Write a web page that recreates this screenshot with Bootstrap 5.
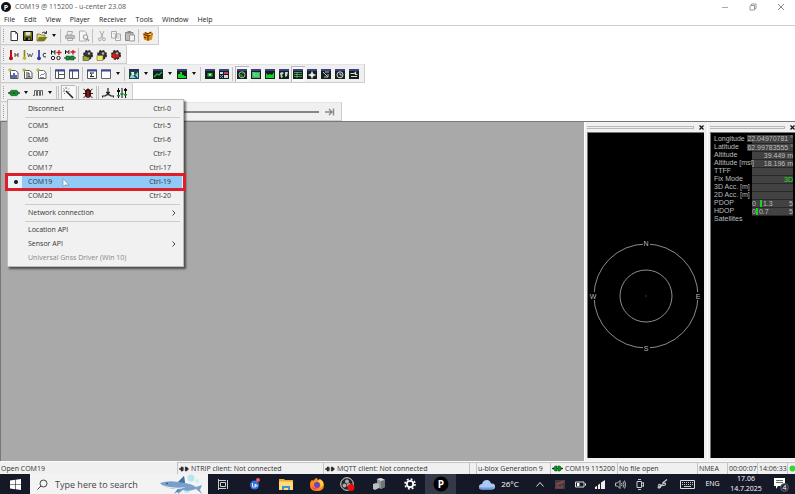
<!DOCTYPE html>
<html lang="en">
<head>
<meta charset="utf-8">
<meta name="viewport" content="width=device-width, initial-scale=1">
<title>COM19 @ 115200 - u-center 23.08</title>
<link href="https://cdn.jsdelivr.net/npm/bootstrap@5.3.0/dist/css/bootstrap.min.css" rel="stylesheet">
<style>
  body { font: 7px/10px "Open Sans", "Noto Sans", sans-serif; color: #222; background: #fff; }
  svg { display: block; flex: none; }
  button { border: 0; background: none; padding: 0; color: inherit; font: inherit; }
  .titlebar { height: 13px; color: #555; padding-left: 1px; }
  .winctl button { width: 28px; height: 13px; }
  .appmenu { height: 13px; border-bottom: 1px solid #cfcfcf; }
  .appmenu .nav-link { padding: 0 4px; margin-right: 1px; color: #222; line-height: 13px; }
  .toolstrip { background: #f0f0f0; border: 1px solid #cdcdcd; border-top-color: #e4e4e4; height: 19px; padding-right: 3px; width: fit-content; }
  .toolstrip::before { content: ""; width: 2px; height: 13px; margin: 0 2px 0 2px; border-left: 1px dotted #999; }
  .tool { width: 14px; height: 16px; display: flex; align-items: center; justify-content: center; }
  .tool svg { width: 12px; height: 12px; }
  .tool.active { background: #f8f8f8; box-shadow: inset 1px 1px #b8b8b8; }
  .drop { width: 10px; height: 16px; display: flex; align-items: center; justify-content: center; }
  .drop::after { content: ""; border: 2px solid transparent; border-top: 3px solid #111; border-bottom: 0; }
  .divide { width: 4px; height: 14px; padding-left: 1px; }
  .divide::before { content: ""; display: block; height: 14px; width: 1px; background: #c2c2c2; }
  .divide-two { width: 6px; }
  .divide-two::before { width: 3px; border: solid #c2c2c2; border-width: 0 1px; background: none; }
  .playstrip { width: 43%; padding-right: 4px; }
  .playstrip input { appearance: none; background: none; height: 12px; margin: 0 4px 0 2px; min-width: 0; }
  .playstrip input::-webkit-slider-runnable-track { height: 2px; background: #858585; }
  .playstrip input::-webkit-slider-thumb { appearance: none; width: 5px; height: 10px; margin-top: -4px; background: #888; }
  .portmenu { position: absolute; left: 7px; top: 99px; width: 177px; z-index: 5; padding: 2px 1px 1px; background: #f1f1f1; border: 1px solid #bbb; box-shadow: 2px 2px 2px rgba(0,0,0,.55); }
  .portmenu button { display: flex; justify-content: space-between; align-items: center; position: relative; width: 100%; height: 14px; padding: 0 11px 0 19px; color: #333; text-align: left; }
  .portmenu hr { margin: 1px 2px 1px 16px; border: 0; height: 1px; background: #ccc; opacity: 1; }
  .portmenu button.chosen { background: linear-gradient(90deg, #e9f3fb 13px, #91c9f7 13px); z-index: 2; }
  .portmenu .chosen::before { content: ""; position: absolute; left: 5px; top: 5px; width: 4px; height: 4px; border-radius: 2px; background: #111; }
  .portmenu .chosen::after { content: ""; position: absolute; inset: -2px -4px; border: 3px solid #dc1f2b; }
  .portmenu .pointer { position: absolute; left: 53px; top: 3px; }
  .portmenu .faded { color: #888; }
  .portmenu .submenu { padding-right: 6px; }
  .workspace { background: #a9a9a9; border: solid #777; border-width: 1px 0 0 1px; min-height: 0; }
  .dock { background: #f0f0f0; border-left: 1px solid #fff; padding: 0 3px 3px 2px; }
  .dock-sky { flex: 0 0 123px; }
  .dock-data { flex: 0 0 88px; padding-right: 0; }
  .dockhead { height: 10px; }
  .dockhead span { height: 3px; border: solid #b8b8b8; border-width: 1px 1px 1px 0; }
  .dockhead button { width: 6px; height: 10px; margin-left: 4px; display: flex; align-items: center; justify-content: center; }
  .blackpane { background: #000; border: solid #777; border-width: 1px 0 0 1px; }
  .navdata { font: 7px/8px "Liberation Sans", Arial, sans-serif; color: #bdbdbd; margin: 2px 0 0 3px; width: calc(100% - 5px); table-layout: fixed; }
  .navdata th, .navdata td { padding: 0; height: 8px; font-weight: 400; white-space: nowrap; }
  .navdata td { width: 41px; background: #424242; border-bottom: 1px solid #282828; line-height: 7px; }
  .navdata tr:last-child td { background: none; border: 0; }
  .val { display: flex; justify-content: flex-end; }
  .val span { background: #424242; }
  .val.fix { color: #19e322; }
  .gauge { display: flex; justify-content: space-between; }
  .gauge i { display: inline-block; width: 2px; height: 7px; background: #14d51c; vertical-align: top; margin-right: 1px; }
  .statusline { height: 13px; background: #f0f0f0; border-top: 1px solid #fafafa; white-space: nowrap; line-height: 12px; color: #333; }
  .statusline > div { border: solid #c4c4c4; border-width: 1px 0 0 1px; height: 12px; padding-left: 1px; overflow: hidden; display: flex; align-items: center; gap: 2px; }
  .statusline > .msg { border-width: 1px 0 0 0; border-color: #f0f0f0; }
  .w-client { width: 146px; } .w-gap { width: 7px; } .w-gen { width: 74px; } .w-port { width: 67px; } .w-file { width: 80px; } .w-clock { width: 30px; } .w-dot { width: 8px; }
  .taskbar { height: 20px; background: #151827; color: #fff; }
  .taskbar button { height: 20px; display: flex; align-items: center; justify-content: center; flex: none; }
  .taskbar .start { width: 30px; }
  .app { width: 31px; } .app.active { background: #353846; }
  .find { width: 179px; background: #f3f3f3; height: 20px; padding-left: 7px; }
  .find input { border: 0; background: none; font-size: 9px; line-height: 14px; height: 16px; min-width: 0; width: 100px; padding: 0 0 0 7px; color: #444; outline: 0; }
  .find input::placeholder { color: #444; opacity: 1; }
  .tray button { width: 20px; } .tray .wide { width: 25px; }
  .taskbar .stamp { width: 42px; display: block; line-height: 10px; overflow: hidden; }
  .taskbar .note { width: 28px; }
  .taskbar .weather { width: 62px; font-size: 8px; gap: 5px; margin-left: 12px; }
</style>
<script src="https://cdn.jsdelivr.net/npm/bootstrap@5.3.0/dist/js/bootstrap.bundle.min.js"></script>
</head>
<body class="vh-100 d-flex flex-column overflow-hidden position-relative">
<svg width="0" height="0" class="position-absolute" aria-hidden="true">
  <symbol id="i-new" viewBox="0 0 12 12"><path d="M3 1.500h4.500l2 2v7h-6.500z" fill="#fff" stroke="#333"/><path d="M7.500 1.500v2h2" fill="none" stroke="#333" stroke-width=".7"/></symbol>
  <symbol id="i-save" viewBox="0 0 12 12"><path d="M1.500 1.500h9v9h-9z" fill="#686d0b" stroke="#111"/><path d="M3.500 2h5v3.500h-5z" fill="#ddd"/><path d="M3.500 7.500h5v3h-5z" fill="#111"/><path d="M6.500 8h1v2h-1z" fill="#eee"/></symbol>
  <symbol id="i-open" viewBox="0 0 12 12"><path d="M1 4h3l1 1h4v2l-1.500 4h-6.500z" fill="#e4da62" stroke="#444" stroke-width=".6"/><path d="M3 7h8.500l-3 4h-7.500z" fill="#777b18"/><path d="M6 3q2-2 4 0M10.500 1v2.500h-2" fill="none" stroke="#222" stroke-width=".9"/></symbol>
  <symbol id="i-print" viewBox="0 0 12 12"><path d="M3.500 1.500h5l-1 3.500h-4.500zM1.500 5.500h9v3h-9zM3.500 8h5v2.500h-5z" fill="#eee" stroke="#aaa"/><path d="M2 7h8" stroke="#999"/></symbol>
  <symbol id="i-preview" viewBox="0 0 12 12"><path d="M1.500 1h5l2 2v8h-7z" fill="#f7f7f7" stroke="#b0b0b0"/><circle cx="7.500" cy="7" r="2.300" fill="#eee" stroke="#999"/><path d="M9 8.500l2 2.500" stroke="#999" stroke-width="1.300"/></symbol>
  <symbol id="i-cut" viewBox="0 0 12 12"><path d="M4 1l3 7M8 1l-3 7" stroke="#aaa"/><circle cx="3.800" cy="9.300" r="1.400" fill="none" stroke="#aaa"/><circle cx="8" cy="9.300" r="1.400" fill="none" stroke="#aaa"/></symbol>
  <symbol id="i-copy" viewBox="0 0 12 12"><path d="M1.500 1.500h5v6.500h-5zM5.500 4h5v6.500h-5z" fill="#f4f4f4" stroke="#aaa"/><path d="M7 6h2.500M7 8h2.500M3 3.500h2" stroke="#b5b5b5" stroke-width=".7"/></symbol>
  <symbol id="i-paste" viewBox="0 0 12 12"><path d="M1.500 2.500h7.500v8h-7.500z" fill="#bbb" stroke="#888"/><path d="M3.500 1h3.500v2.500h-3.500z" fill="#888"/><path d="M5.500 5h5v6h-5z" fill="#f3f3f3" stroke="#999"/></symbol>
  <symbol id="i-pack" viewBox="0 0 12 12"><path d="M1 4l2-2 3 1 3-1.500 2 2-1 6-4 1.500-4-1.500z" fill="#e08616"/><path d="M1.500 4l4.500 2 4.500-2M6 6v4.500M3 2.500l3 1.500 3-2M2 7l2 1" stroke="#4b2200" fill="none"/><path d="M6.500 4.500h3" stroke="#ffdc3c"/></symbol>
  <symbol id="i-hot" viewBox="0 0 12 12"><path d="M3 1v7.500" stroke="#b51313" stroke-width="2"/><circle cx="3" cy="9.300" r="2" fill="#b51313"/><path d="M7 4v4M10 4v4M7 6h3" stroke="#533"/></symbol>
  <symbol id="i-warm" viewBox="0 0 12 12"><path d="M2.500 1v7.500" stroke="#8b8716" stroke-width="1.600"/><circle cx="2.500" cy="9.300" r="1.700" fill="#c1b91d"/><path d="M5.500 4l1.200 4 1.300-3 1.300 3 1.500-4" fill="none" stroke="#4f5b58" stroke-width=".9"/></symbol>
  <symbol id="i-cold" viewBox="0 0 12 12"><path d="M3 1v7.500" stroke="#3645b8" stroke-width="1.800"/><circle cx="3" cy="9.300" r="1.900" fill="#2735a8"/><path d="M10 4.500q-3-1-3 1.500t3 2" fill="none" stroke="#333"/></symbol>
  <symbol id="i-mlink" viewBox="0 0 12 12"><path d="M1.500 5.500v-4l1.700 2 1.700-2v4" fill="none" stroke="#111"/><path d="M9 1v5M6.500 3.500h5" stroke="#d31818" stroke-width="1.400"/><circle cx="3" cy="9" r="1.700" fill="none" stroke="#222"/><circle cx="8.500" cy="9" r="1.700" fill="none" stroke="#222"/></symbol>
  <symbol id="i-mplug" viewBox="0 0 12 12"><path d="M1.500 5v-3.500l1.700 2 1.700-2v3.500" fill="none" stroke="#111"/><path d="M9 1v4.500M6.500 3h5" stroke="#d31818" stroke-width="1.400"/><path d="M0 9h12" stroke="#111"/><path d="M2 7h3.500v4h-3.500zM6.500 7h3.500v4h-3.500z" fill="#0a9a23" stroke="#033" stroke-width=".5"/></symbol>
  <symbol id="i-gear" viewBox="0 0 12 12"><circle cx="6" cy="6" r="4" fill="#444" stroke="#222" stroke-width="2" stroke-dasharray="2 1.140"/><circle cx="6" cy="6" r="3.500" fill="#333"/><circle cx="7" cy="4.500" r="1.200" fill="#bbb"/></symbol>
  <symbol id="i-gearopen" viewBox="0 0 12 12"><use href="#i-gear"/><path d="M1 7h3l1 1h3l-1.500 3.500h-5.500z" fill="#a8a52b" stroke="#222" stroke-width=".5"/></symbol>
  <symbol id="i-gearcard" viewBox="0 0 12 12"><use href="#i-gear"/><path d="M1 6.500h6v5h-6z" fill="#f4e75a" stroke="#665" stroke-width=".6"/></symbol>
  <symbol id="i-gearred" viewBox="0 0 12 12"><use href="#i-gear"/><path d="M1 6.500l4-3v2h4v3h-4v2z" fill="#dc1717"/></symbol>
  <symbol id="i-page1" viewBox="0 0 12 12"><path d="M2.500 2.500h5l2.500 2v6h-7.500z" fill="#fff" stroke="#555"/><path d="M0 2h4M2 0v4" stroke="#b3ae28"/><path d="M4 10v-3M6 10v-5M8 10v-3" stroke="#213a90" stroke-width="1.500"/></symbol>
  <symbol id="i-page2" viewBox="0 0 12 12"><path d="M2.500 2.500h5l2.500 2v6h-7.500z" fill="#fff" stroke="#555"/><path d="M0 2h4M2 0v4" stroke="#b3ae28"/><path d="M4 5h3v4M4 9h5M4 7h2" fill="none" stroke="#333"/></symbol>
  <symbol id="i-page3" viewBox="0 0 12 12"><path d="M2.500 2.500h5l2.500 2v6h-7.500z" fill="#fff" stroke="#666"/><path d="M0 2h4M2 0v4" stroke="#b3ae28"/><path d="M4 8l2-2 1 1 2-2M4 9.500h4" fill="none" stroke="#888"/></symbol>
  <symbol id="i-winA" viewBox="0 0 12 12"><path d="M1.500 2h9v8.500h-9z" fill="#fff" stroke="#555"/><path d="M1 2.500h10" stroke="#3c479c" stroke-width="2"/><path d="M4.500 3v7M5 6.500h5" stroke="#555"/></symbol>
  <symbol id="i-winB" viewBox="0 0 12 12"><path d="M1.500 2h9v8.500h-9z" fill="#fff" stroke="#555"/><path d="M1 2.500h10" stroke="#3c479c" stroke-width="2"/><path d="M4.500 3v7" stroke="#555"/></symbol>
  <symbol id="i-winS" viewBox="0 0 12 12"><path d="M1.500 2h9v8.500h-9z" fill="#fff" stroke="#555"/><path d="M1 2.500h10" stroke="#3c479c" stroke-width="2"/><path d="M8 5h-4l2 1.800-2 1.800h4" fill="none" stroke="#222"/></symbol>
  <symbol id="i-winE" viewBox="0 0 12 12"><path d="M1.500 2h9v8.500h-9z" fill="#fff" stroke="#666"/><path d="M1 2.500h10" stroke="#3c479c" stroke-width="2"/></symbol>
  <symbol id="i-map" viewBox="0 0 12 12"><path d="M1 1.500h10v9.500h-10z" fill="#1b4a35"/><path d="M1 1h10v2h-10z" fill="#252d76"/><path d="M2 9l3-5 2 3 3-3v6h-8z" fill="#8bd0e0"/><path d="M3 4h3v3h-2z" fill="#e8f3d0"/><path d="M6 7l3 3" stroke="#142f7d" stroke-width="1.500"/></symbol>
  <symbol id="i-dark" viewBox="0 0 12 12"><path d="M1 1h10v10h-10z" fill="#14201c"/><path d="M1 1h10v2h-10z" fill="#3a4287"/></symbol>
  <symbol id="i-chart" viewBox="0 0 12 12"><use href="#i-dark"/><path d="M2 9l3-3 2 1 3-3" fill="none" stroke="#1bbf39" stroke-width="1.200"/></symbol>
  <symbol id="i-hist" viewBox="0 0 12 12"><use href="#i-dark"/><path d="M2 10v-4h2v-2h2v3h2v1h2v2z" fill="#16d327"/></symbol>
  <symbol id="i-camera" viewBox="0 0 12 12"><use href="#i-dark"/><path d="M3.500 5h5v3.500h-5z" fill="#16b93a"/><circle cx="6" cy="6.700" r="1" fill="#dfd"/></symbol>
  <symbol id="i-deck" viewBox="0 0 12 12"><use href="#i-dark"/><path d="M2 4h3v2h-3zM6 7h4v3h-4z" fill="#d6d4e9"/><path d="M6 4h4v2h-4z" fill="#c84545"/><path d="M2 7l3 3M5 7l-3 3" stroke="#68a4e9"/></symbol>
  <symbol id="i-sky" viewBox="0 0 12 12"><use href="#i-dark"/><circle cx="6" cy="6.800" r="3" fill="none" stroke="#a9bfa9"/><path d="M4 7h2v2M6 5h2" stroke="#25bd34" fill="none"/></symbol>
  <symbol id="i-area" viewBox="0 0 12 12"><use href="#i-dark"/><path d="M2 4h8v6h-8z" fill="#35b65b"/><path d="M4 4v4h5M4 6h5" stroke="#b4e4bb" fill="none" stroke-width=".7"/></symbol>
  <symbol id="i-level" viewBox="0 0 12 12"><use href="#i-dark"/><path d="M2 5l2 2 2-1 2 1 2-3v6h-8z" fill="#18cf2b"/></symbol>
  <symbol id="i-world" viewBox="0 0 12 12"><use href="#i-dark"/><path d="M2 5l2-1 2 1-2 2 1 2-2 1zM7 4h3l-1 4-2 1z" fill="#c8d5c8"/></symbol>
  <symbol id="i-list" viewBox="0 0 12 12"><use href="#i-dark"/><path d="M2 4.500h8M2 6.500h8M2 8.500h8" stroke="#369550"/><path d="M5 4v6" stroke="#a7c5a8" stroke-width=".6"/></symbol>
  <symbol id="i-star" viewBox="0 0 12 12"><use href="#i-dark"/><path d="M6 3.500l1 2.500 2.500 1-2.500 1-1 2.500-1-2.500-2.500-1 2.500-1z" fill="#f0f0f0" stroke="#f0f0f0" stroke-width=".6"/></symbol>
  <symbol id="i-deviate" viewBox="0 0 12 12"><use href="#i-dark"/><path d="M3 4l5 5M8 6v3h-4M5 4h4" stroke="#bdc3bd" fill="none"/></symbol>
  <symbol id="i-clock" viewBox="0 0 12 12"><use href="#i-dark"/><circle cx="6" cy="6.800" r="3" fill="none" stroke="#ddd"/><path d="M6 5v2h2" stroke="#ddd" fill="none"/></symbol>
  <symbol id="i-horizon" viewBox="0 0 12 12"><use href="#i-dark"/><path d="M2.500 5.500h4l1-1v2h2M3 8.500h6" stroke="#d5dad5" fill="none" stroke-width="1.200"/></symbol>
  <symbol id="i-plug" viewBox="0 0 12 12"><path d="M0 6h12" stroke="#222" stroke-width="1.300"/><path d="M2 4.500l1.500-1.200h2v5.400h-2l-1.500-1.200zM6.500 3.300h2l1.500 1.200v3l-1.500 1.200h-2z" fill="#079b20" stroke="#023f14" stroke-width=".6"/></symbol>
  <symbol id="i-unplug" viewBox="0 0 12 12"><path d="M4.500 3.500h-2v2h-2v1h2v2h2zM7.500 3.500h1.500l2.500 2.500-2.500 2.500h-1.500z" fill="#222" stroke="#222" stroke-width=".6"/><path d="M4.500 5h1.500M4.500 7h1.500" stroke="#222"/></symbol>
  <symbol id="i-wave" viewBox="0 0 12 12"><path d="M1 8.500h1.500v-5h2v5h1v-5h2v5h1v-5h2v5" fill="none" stroke="#555" stroke-width=".9"/></symbol>
  <symbol id="i-wand" viewBox="0 0 12 12"><path d="M4 4l7 7" stroke="#222" stroke-width="1.600"/><path d="M4 0v2M1 4h2M1.500 1.500l1 1M6 2.500l1-1M2 7l1-1M6.500 4.500h1" stroke="#666" stroke-width=".9"/></symbol>
  <symbol id="i-bug" viewBox="0 0 12 12"><path d="M1.500 2l2.500 2M10.500 2l-2.500 2M1 6.500h10M1.500 11l2-2M10.500 11l-2-2" stroke="#222"/><path d="M3 4q3-5 6 0v5q-3 4-6 0z" fill="#4b1111"/><path d="M6 4v6" stroke="#a12929"/></symbol>
  <symbol id="i-antenna" viewBox="0 0 12 12"><path d="M.5 10.500v-1.500h2.500q3-3 6 0h2.500v1.500M6 1v5.500M4.300 5l1.700 2 1.700-2" fill="none" stroke="#222" stroke-width="1.200"/></symbol>
  <symbol id="i-sliders" viewBox="0 0 12 12"><path d="M2.500 1v10M6 1v10M9.500 1v10" stroke="#111"/><path d="M1 3h3v2h-3zM8 2h3v2h-3z" fill="#111"/><path d="M4.500 6h3v2h-3z" fill="#118c29"/><path d="M1 8h3v1.500h-3zM8 7h3v1.500h-3z" fill="#118c29"/></symbol>
</svg>

<header>
  <div class="titlebar d-flex align-items-center">
    <svg class="me-1" width="10" height="10" viewBox="0 0 10 10"><circle cx="5" cy="5" r="5" fill="#111"/><text x="5" y="7.500" text-anchor="middle" fill="#fff" font-size="7" font-weight="700">P</text></svg>
    <span class="me-auto">COM19 @ 115200 - u-center 23.08</span>
    <div class="winctl d-flex">
      <button aria-label="Minimize"><svg class="m-auto" width="8" height="8"><path d="M1 4.500h6" stroke="#aaa"/></svg></button>
      <button aria-label="Restore"><svg class="m-auto" width="8" height="8"><path d="M1 3.500q0-1 1-1h3.500v4.500h-4.500zM2.500 2.500v-1.500h4.500v4.500h-1.500" fill="none" stroke="#999"/></svg></button>
      <button aria-label="Close"><svg class="m-auto" width="8" height="8"><path d="M1 1l6 6M7 1l-6 6" stroke="#888"/></svg></button>
    </div>
  </div>
  <nav class="appmenu nav flex-nowrap" aria-label="Main menu">
    <a class="nav-link" href="#">File</a><a class="nav-link" href="#">Edit</a><a class="nav-link" href="#">View</a><a class="nav-link" href="#">Player</a><a class="nav-link" href="#">Receiver</a><a class="nav-link" href="#">Tools</a><a class="nav-link" href="#">Window</a><a class="nav-link" href="#">Help</a>
  </nav>
  <div class="toolstrip d-flex align-items-center" role="toolbar" aria-label="File">
    <button class="tool" aria-label="New"><svg><use href="#i-new"/></svg></button><button class="tool" aria-label="Save"><svg><use href="#i-save"/></svg></button><button class="tool" aria-label="Open"><svg><use href="#i-open"/></svg></button><button class="drop" aria-label="Recent files"></button><span class="divide"></span>
    <button class="tool" aria-label="Print"><svg><use href="#i-print"/></svg></button><button class="tool" aria-label="Print preview"><svg><use href="#i-preview"/></svg></button><span class="divide"></span>
    <button class="tool" aria-label="Cut"><svg><use href="#i-cut"/></svg></button><button class="tool" aria-label="Copy"><svg><use href="#i-copy"/></svg></button><button class="tool" aria-label="Paste"><svg><use href="#i-paste"/></svg></button><span class="divide"></span>
    <button class="tool" aria-label="Preferences"><svg><use href="#i-pack"/></svg></button>
  </div>
  <div class="toolstrip d-flex align-items-center" role="toolbar" aria-label="Actions">
    <button class="tool" aria-label="Hot start"><svg><use href="#i-hot"/></svg></button><button class="tool" aria-label="Warm start"><svg><use href="#i-warm"/></svg></button><button class="tool" aria-label="Cold start"><svg><use href="#i-cold"/></svg></button><button class="tool" aria-label="Multiple receivers"><svg><use href="#i-mlink"/></svg></button><button class="tool" aria-label="Connect multiple"><svg><use href="#i-mplug"/></svg></button><span class="divide"></span>
    <button class="tool" aria-label="Load configuration"><svg><use href="#i-gearopen"/></svg></button><button class="tool" aria-label="Store configuration"><svg><use href="#i-gearcard"/></svg></button><button class="tool" aria-label="Revert configuration"><svg><use href="#i-gearred"/></svg></button>
  </div>
  <div class="toolstrip d-flex align-items-center" role="toolbar" aria-label="Views">
    <button class="tool" aria-label="Packet console"><svg><use href="#i-page1"/></svg></button><button class="tool" aria-label="Binary console"><svg><use href="#i-page2"/></svg></button><button class="tool" aria-label="Text console"><svg><use href="#i-page3"/></svg></button><span class="divide"></span>
    <button class="tool" aria-label="Messages"><svg><use href="#i-winA"/></svg></button><button class="tool" aria-label="Configuration"><svg><use href="#i-winB"/></svg></button><span class="divide"></span>
    <button class="tool" aria-label="Statistics"><svg><use href="#i-winS"/></svg></button><button class="tool" aria-label="Table"><svg><use href="#i-winE"/></svg></button><button class="drop" aria-label="Table options"></button><span class="divide divide-two-less"></span>
    <button class="tool" aria-label="Map"><svg><use href="#i-map"/></svg></button><button class="drop" aria-label="Map options"></button><button class="tool" aria-label="Chart"><svg><use href="#i-chart"/></svg></button><button class="drop" aria-label="Chart options"></button><button class="tool" aria-label="Histogram"><svg><use href="#i-hist"/></svg></button><button class="drop" aria-label="Histogram options"></button><span class="divide"></span>
    <button class="tool" aria-label="Camera"><svg><use href="#i-camera"/></svg></button><button class="tool" aria-label="Deviation map"><svg><use href="#i-deck"/></svg></button><span class="divide"></span>
    <button class="tool active" aria-label="Sky"><svg><use href="#i-sky"/></svg></button><button class="tool" aria-label="Signal history"><svg><use href="#i-area"/></svg></button><button class="tool" aria-label="Signal level"><svg><use href="#i-level"/></svg></button><button class="tool" aria-label="World"><svg><use href="#i-world"/></svg></button><button class="tool active" aria-label="Data"><svg><use href="#i-list"/></svg></button><button class="tool" aria-label="Compass"><svg><use href="#i-star"/></svg></button><button class="tool" aria-label="Altitude"><svg><use href="#i-deviate"/></svg></button><button class="tool" aria-label="Clock"><svg><use href="#i-clock"/></svg></button><button class="tool" aria-label="Horizon"><svg><use href="#i-horizon"/></svg></button>
  </div>
  <div class="toolstrip d-flex align-items-center" role="toolbar" aria-label="Communication">
    <button class="tool" aria-label="Connect"><svg><use href="#i-plug"/></svg></button><button class="drop" aria-label="Choose port" aria-expanded="true"></button><button class="tool" aria-label="Baud rate"><svg><use href="#i-wave"/></svg></button><button class="drop" aria-label="Choose baud rate"></button><span class="divide divide-two"></span>
    <button class="tool active" aria-label="Autobauding"><svg><use href="#i-wand"/></svg></button><span class="divide divide-two"></span><button class="tool" aria-label="Debug messages"><svg><use href="#i-bug"/></svg></button><span class="divide divide-two"></span>
    <button class="tool" aria-label="Firmware update"><svg><use href="#i-antenna"/></svg></button><button class="tool" aria-label="Generation configuration"><svg><use href="#i-sliders"/></svg></button>
  </div>
  <div class="toolstrip playstrip d-flex align-items-center" role="toolbar" aria-label="Player">
    <input aria-label="Playback position" class="flex-grow-1" type="range" value="0">
    <button class="tool" aria-label="Jump to end"><svg viewBox="0 0 12 12"><path d="M1 6h7M5 3l3 3-3 3M9.500 2.500v7" stroke="#888" stroke-width="1.400" fill="none"/></svg></button>
  </div>
</header>

<div class="portmenu" role="menu">
  <button role="menuitem"><span>Disconnect</span><span>Ctrl-0</span></button>
  <hr>
  <button role="menuitem"><span>COM5</span><span>Ctrl-5</span></button>
  <button role="menuitem"><span>COM6</span><span>Ctrl-6</span></button>
  <button role="menuitem"><span>COM7</span><span>Ctrl-7</span></button>
  <button role="menuitem"><span>COM17</span><span>Ctrl-17</span></button>
  <button role="menuitem" class="chosen"><span>COM19</span><span>Ctrl-19</span>
    <svg class="pointer" width="8" height="10" viewBox="0 0 8 10"><path d="M1 .5v8l2-1.500h4z" fill="#fff" stroke="#789" stroke-width=".7"/></svg></button>
  <button role="menuitem"><span>COM20</span><span>Ctrl-20</span></button>
  <hr>
  <button role="menuitem" class="submenu"><span>Network connection</span><svg width="4" height="6"><path d="M.5 .5l2.500 2.500-2.500 2.500" fill="none" stroke="#444"/></svg></button>
  <hr>
  <button role="menuitem"><span>Location API</span></button>
  <button role="menuitem" class="submenu"><span>Sensor API</span><svg width="4" height="6"><path d="M.5 .5l2.500 2.500-2.500 2.500" fill="none" stroke="#444"/></svg></button>
  <button role="menuitem" class="faded" disabled><span>Universal Gnss Driver (Win 10)</span></button>
</div>

<main class="workspace flex-grow-1 d-flex">
  <div class="flex-grow-1"></div>
  <section class="dock dock-sky d-flex flex-column" aria-label="Satellite sky view">
    <div class="dockhead d-flex align-items-center"><span class="flex-grow-1"></span><button aria-label="Close sky view"><svg width="5" height="5"><path d="M.5 .5l4 4M4.500 .5l-4 4" stroke="#111" stroke-width="1.200"/></svg></button></div>
    <div class="blackpane flex-grow-1 d-flex align-items-center justify-content-center">
      <svg width="114" height="114" viewBox="0 0 114 114" font-family="Liberation Sans, Arial, sans-serif" font-size="7" text-anchor="middle">
        <circle cx="57" cy="57" r="52" fill="none" stroke="#8c8c8c"/><circle cx="57" cy="57" r="26" fill="none" stroke="#8c8c8c"/><path d="M56.500 57h1" stroke="#777"/>
        <path d="M54 1h7v8h-7zM54 105h7v8h-7zM1 53h7v8h-7zM106 53h7v8h-7z" fill="#000"/>
        <g fill="#bbb"><text x="57" y="7">N</text><text x="57" y="112">S</text><text x="4" y="60">W</text><text x="109" y="60">E</text></g>
      </svg>
    </div>
  </section>
  <section class="dock dock-data d-flex flex-column" aria-label="Navigation data">
    <div class="dockhead d-flex align-items-center"><span class="flex-grow-1"></span><button aria-label="Close data view"><svg width="5" height="5"><path d="M.5 .5l4 4M4.500 .5l-4 4" stroke="#111" stroke-width="1.200"/></svg></button></div>
    <div class="blackpane flex-grow-1">
      <table class="navdata">
        <tr><th scope="row">Longitude</th><td><div class="val"><span>22.04970781 °</span></div></td></tr>
        <tr><th scope="row">Latitude</th><td><div class="val"><span>62.99783555 °</span></div></td></tr>
        <tr><th scope="row">Altitude</th><td><div class="val">39.449 m</div></td></tr>
        <tr><th scope="row">Altitude [msl]</th><td><div class="val">18.196 m</div></td></tr>
        <tr><th scope="row">TTFF</th><td></td></tr>
        <tr><th scope="row">Fix Mode</th><td><div class="val fix">3D</div></td></tr>
        <tr><th scope="row">3D Acc. [m]</th><td></td></tr>
        <tr><th scope="row">2D Acc. [m]</th><td></td></tr>
        <tr><th scope="row">PDOP</th><td><div class="gauge"><span>0</span><span class="me-auto ps-1"><i></i>1.3</span><span>5</span></div></td></tr>
        <tr><th scope="row">HDOP</th><td><div class="gauge"><span>0</span><span class="me-auto"><i></i>0.7</span><span>5</span></div></td></tr>
        <tr><th scope="row">Satellites</th><td></td></tr>
      </table>
    </div>
  </section>
</main>

<footer>
  <div class="statusline d-flex">
    <div class="msg flex-grow-1">Open COM19</div>
    <div class="w-client"><svg width="10" height="10"><use href="#i-unplug"/></svg>NTRIP client: Not connected</div>
    <div class="w-client"><svg width="10" height="10"><use href="#i-unplug"/></svg>MQTT client: Not connected</div>
    <div class="w-gap"></div>
    <div class="w-gen">u-blox Generation 9</div>
    <div class="w-port"><svg width="11" height="11"><use href="#i-plug"/></svg>COM19 115200</div>
    <div class="w-file">No file open</div>
    <div class="w-clock">NMEA</div>
    <div class="w-clock">00:00:07</div>
    <div class="w-clock">14:06:33</div>
    <div class="w-dot"><svg width="7" height="7"><circle cx="3.500" cy="3.500" r="3" fill="#34d634"/></svg></div>
  </div>
  <div class="taskbar d-flex">
    <button class="start" aria-label="Start"><svg width="11" height="11"><path d="M0 1.500l5-.7v4.400h-5zM5.600 .7l5.400-.7v5.200h-5.400zM0 5.800h5v4.400l-5-.7zM5.600 5.800h5.400v5.200l-5.400-.7z" fill="#fff"/></svg></button>
    <div class="find d-flex align-items-center">
      <svg width="11" height="11"><circle cx="6.500" cy="4.500" r="3.500" fill="none" stroke="#444"/><path d="M4 7l-3.500 3.500" stroke="#444"/></svg>
      <input aria-label="Search" type="text" placeholder="Type here to search">
      <svg class="ms-auto me-1" width="45" height="20" viewBox="0 0 45 20"><circle cx="32" cy="4" r="3.500" fill="#b7e6ef"/><circle cx="38" cy="7" r="2" fill="#cdeff4"/><circle cx="28" cy="16" r="3" fill="#b7e6ef"/><path d="M1 9q9-3 18-1l6-6 1 7q7 1 11 4l6-2-2 5 2 4-6-5q-7 3-13 1l-5 4-1-5q-9 0-15-4z" fill="#7a9fca"/><path d="M3 11q11 4 24 2-7 3-12 1.500-7 0-12-3.500z" fill="#e1f0f7"/><path d="M19 8l6-6 1 7zM18 16l-3 4 6-4z" fill="#466fa5"/><circle cx="8" cy="9.500" r=".7" fill="#123"/></svg>
    </div>
    <button class="app" aria-label="Task view"><svg width="11" height="11"><path d="M2.500 3.500h5v4h-5zM1 1.500h7M1 9.500h7M9.500 1v9" fill="none" stroke="#ccc"/><path d="M.5 0v11" stroke="#ccc"/></svg></button>
    <button class="app" aria-label="Team chat"><svg width="12" height="14"><circle cx="5.500" cy="8" r="4.500" fill="#3471da"/><path d="M3.500 6v4h3v-3M5 8h3v2" fill="none" stroke="#d9e8ff"/><circle cx="9" cy="3" r="2" fill="#ef5b59"/></svg></button>
    <button class="app" aria-label="File Explorer"><svg width="14" height="12"><path d="M0 1h5l1 1h8v10h-14z" fill="#e8ae32"/><path d="M0 3.500h14v8.500h-14z" fill="#ffdb79"/><path d="M3 12v-4h8v4h-2v-2h-4v2z" fill="#4094d1"/></svg></button>
    <button class="app" aria-label="Firefox"><svg width="14" height="14"><path d="M2 3q1 1 2 0 1-2 3-2 0 2 3 3l0-2q4 2 4 6 0 6-7 6t-7-6q0-4 2-5z" fill="#ff8a19"/><path d="M9 2q5 2 4 6-1 2-3 3 2-5-2-6z" fill="#ffd34c"/><circle cx="7" cy="8" r="3" fill="#7144bc"/><path d="M1 7q3 6 8 4-3 3-6 1z" fill="#ff3f45"/></svg></button>
    <button class="app" aria-label="OBS Studio"><svg width="15" height="14"><circle cx="7" cy="7" r="6.300" fill="#252525" stroke="#ddd"/><circle cx="7" cy="4.500" r="2" fill="#aaa"/><circle cx="4.500" cy="8.500" r="2" fill="#aaa"/><circle cx="9" cy="8" r="2" fill="#aaa"/><circle cx="11" cy="10.500" r="3.500" fill="#f00c0c"/></svg></button>
    <button class="app" aria-label="Device tool"><svg width="14" height="12"><path d="M5 1l4-1 4 2v7l-4 2-4-2z" fill="#8f9697"/><path d="M5 1l4-1 4 2-4 1z" fill="#d5dad9"/><path d="M1 6l3-1 3 1v4l-4 2-2-1z" fill="#b8bfbe"/><path d="M9 3l4-1v7l-4 2z" fill="#6e7576"/></svg></button>
    <button class="app" aria-label="Settings"><svg width="12" height="12"><circle cx="6" cy="6" r="3.200" fill="none" stroke="#fff" stroke-width="1.800"/><circle cx="6" cy="6" r="5" fill="none" stroke="#fff" stroke-width="1.600" stroke-dasharray="1.930 2"/></svg></button>
    <button class="app active" aria-label="u-center"><svg width="16" height="16"><circle cx="8" cy="8" r="7.500" fill="#000"/><text x="8" y="11.500" text-anchor="middle" fill="#fff" font-size="10" font-weight="700">P</text></svg></button>
    <button class="weather me-auto"><svg width="17" height="11"><path d="M3 10.500q-3 0-3-2.500 0-3 3-3 1-4 5-4 3 0 4 3.500 4-.5 4 3 0 3-3 3z" fill="#a9c9f3"/><path d="M3 10.500q-3 0-3-2.500 6 1 15 0-1 2.500-3 2.500z" fill="#6f9ddd"/></svg>26°C</button>
    <div class="tray d-flex">
      <button aria-label="Show hidden icons"><svg width="8" height="5"><path d="M.5 4.500l3.500-4 3.500 4" fill="none" stroke="#ddd"/></svg></button>
      <button aria-label="Monitor"><svg width="10" height="9"><path d="M0 0h10v9h-10z" fill="#374044"/><path d="M1 4.500l8-3" stroke="#b33c3c" stroke-width="1.600"/><path d="M1 8.500v-2M3 8.500v-3M5 8.500v-2M7 8.500v-3" stroke="#b44"/></svg></button>
      <button aria-label="Battery"><svg width="11" height="7"><path d="M.5 1h8.500v5h-8.500z" fill="none" stroke="#ddd"/><path d="M2 2h2.500v3h-2.500zM10 2.500h1v2h-1z" fill="#fff"/></svg></button>
      <button aria-label="Network"><svg width="10" height="9"><path d="M0 9v-2l2-1v3zM3 9v-4l2-1.500v5.500zM6 9v-6.500l4-2.500v9z" fill="#eee"/></svg></button>
      <button aria-label="Volume"><svg width="11" height="9"><path d="M.5 3h2l2.500-2.500v8l-2.500-2.500h-2zM6.500 3q1 1.500 0 3M8 1.500q2 3 0 6M9.500 .5q2.500 4 0 8" fill="none" stroke="#ccc" stroke-width=".9"/></svg></button>
      <button aria-label="Camera"><svg width="8" height="11"><path d="M1 2.500h4.500v6h-4.500zM5.500 4.500l2-1v4l-2-1M2 .5h3M2 10.500h3" fill="none" stroke="#ccc"/></svg></button>
      <button class="wide" aria-label="Pen"><svg width="11" height="10"><path d="M1 6.500q1.500-2 2.500-.5t-1 3q-2 0-1-1.500 3-1 5-1t2-1.500-2-.5-2 2M5.500 4l4.500-3.500" fill="none" stroke="#ccc" stroke-width="1.200"/></svg></button>
      <button class="wide" aria-label="Keyboard"><svg width="15" height="9"><path d="M.5 .5h14v8h-14z" fill="none" stroke="#ddd"/><path d="M2 2.500h11M2 4.500h11" stroke="#ccc" stroke-dasharray="1 1"/><path d="M4 6.500h7" stroke="#ccc"/></svg></button>
      <button class="wide">ENG</button>
      <button class="stamp">17.06<br>14.7.2025</button>
      <button class="note" aria-label="Notifications, 4 new"><svg width="16" height="15"><path d="M1 1h11v8h-7l-2 3v-3h-2z" fill="#fff"/><path d="M3 3.500h7M3 5.500h7" stroke="#444" stroke-width=".8"/><circle cx="11.500" cy="10.500" r="4" fill="#222838" stroke="#778" stroke-width=".7"/><text x="11.500" y="13" text-anchor="middle" font-size="7" fill="#fff">4</text></svg></button>
    </div>
  </div>
</footer>
</body>
</html>
